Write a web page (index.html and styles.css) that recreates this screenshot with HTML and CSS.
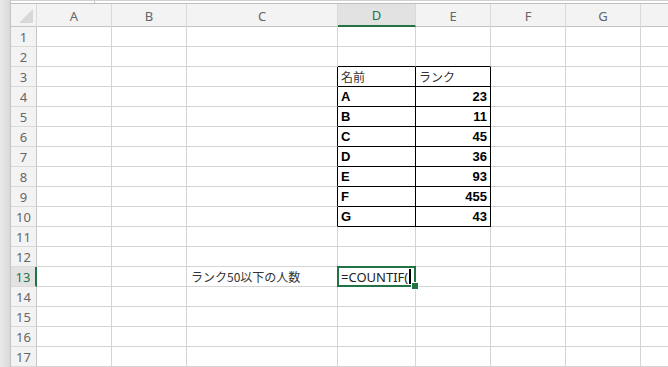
FILE: index.html
```html
<!DOCTYPE html>
<html lang="ja">
<head>
<meta charset="utf-8">
<link rel="stylesheet" href="styles.css">
</head>
<body>
<div class="app">
  <div class="strip"></div>
  <div class="main">
    <div class="topbar"><div class="namebox"></div></div>
    <div class="sheet">
      <div class="ch corner"></div><div class="ch">A</div><div class="ch">B</div><div class="ch">C</div><div class="ch sel">D</div><div class="ch">E</div><div class="ch">F</div><div class="ch">G</div><div class="ch last"></div>

      <div class="rh">1</div><div class="c"></div><div class="c"></div><div class="c"></div><div class="c"></div><div class="c"></div><div class="c"></div><div class="c"></div><div class="c last"></div>
      <div class="rh">2</div><div class="c"></div><div class="c"></div><div class="c"></div><div class="c tt"></div><div class="c tt"></div><div class="c"></div><div class="c"></div><div class="c last"></div>
      <div class="rh">3</div><div class="c"></div><div class="c"></div><div class="c tl"></div><div class="c tb jp">名前</div><div class="c tb jp">ランク</div><div class="c"></div><div class="c"></div><div class="c last"></div>
      <div class="rh">4</div><div class="c"></div><div class="c"></div><div class="c tl"></div><div class="c tb b">A</div><div class="c tb b num">23</div><div class="c"></div><div class="c"></div><div class="c last"></div>
      <div class="rh">5</div><div class="c"></div><div class="c"></div><div class="c tl"></div><div class="c tb b">B</div><div class="c tb b num">11</div><div class="c"></div><div class="c"></div><div class="c last"></div>
      <div class="rh">6</div><div class="c"></div><div class="c"></div><div class="c tl"></div><div class="c tb b">C</div><div class="c tb b num">45</div><div class="c"></div><div class="c"></div><div class="c last"></div>
      <div class="rh">7</div><div class="c"></div><div class="c"></div><div class="c tl"></div><div class="c tb b">D</div><div class="c tb b num">36</div><div class="c"></div><div class="c"></div><div class="c last"></div>
      <div class="rh">8</div><div class="c"></div><div class="c"></div><div class="c tl"></div><div class="c tb b">E</div><div class="c tb b num">93</div><div class="c"></div><div class="c"></div><div class="c last"></div>
      <div class="rh">9</div><div class="c"></div><div class="c"></div><div class="c tl"></div><div class="c tb b">F</div><div class="c tb b num">455</div><div class="c"></div><div class="c"></div><div class="c last"></div>
      <div class="rh">10</div><div class="c"></div><div class="c"></div><div class="c tl"></div><div class="c tb b">G</div><div class="c tb b num">43</div><div class="c"></div><div class="c"></div><div class="c last"></div>
      <div class="rh">11</div><div class="c"></div><div class="c"></div><div class="c"></div><div class="c"></div><div class="c"></div><div class="c"></div><div class="c"></div><div class="c last"></div>
      <div class="rh">12</div><div class="c"></div><div class="c"></div><div class="c"></div><div class="c"></div><div class="c"></div><div class="c"></div><div class="c"></div><div class="c last"></div>
      <div class="rh sel">13</div><div class="c"></div><div class="c"></div><div class="c jp label">ランク50以下の人数</div><div class="c active"><span class="formula">=COUNTIF(</span><span class="caret"></span></div><div class="c"></div><div class="c"></div><div class="c"></div><div class="c last"></div>
      <div class="rh">14</div><div class="c"></div><div class="c"></div><div class="c"></div><div class="c"></div><div class="c"></div><div class="c"></div><div class="c"></div><div class="c last"></div>
      <div class="rh">15</div><div class="c"></div><div class="c"></div><div class="c"></div><div class="c"></div><div class="c"></div><div class="c"></div><div class="c"></div><div class="c last"></div>
      <div class="rh">16</div><div class="c"></div><div class="c"></div><div class="c"></div><div class="c"></div><div class="c"></div><div class="c"></div><div class="c"></div><div class="c last"></div>
      <div class="rh">17</div><div class="c"></div><div class="c"></div><div class="c"></div><div class="c"></div><div class="c"></div><div class="c"></div><div class="c"></div><div class="c last"></div>
    </div>
  </div>
</div>
</body>
</html>
```

FILE: styles.css
```css
* { box-sizing: border-box; }
html, body { margin: 0; padding: 0; background: #fff; }
body { width: 668px; height: 367px; overflow: hidden; font-family: "Noto Sans", "Noto Sans CJK JP", sans-serif; }

.app { display: flex; height: 367px; }
.strip {
  width: 11px; flex: none;
  background: linear-gradient(to right, #e9e9e9, #d9d9d9);
  border-right: 1px solid #c4c4c4;
}
.main { flex: 1; display: flex; flex-direction: column; min-width: 0; }

.topbar {
  height: 4px; flex: none;
  background: #fff;
  border-top: 1px solid #d0d0d0;
  border-bottom: 1px solid #bdbdbd;
}
.namebox { width: 84px; height: 100%; border-right: 1px solid #c8c8c8; }

.sheet {
  display: grid;
  grid-template-columns: 26px 75px 75px 151px 78px 75px 75px 75px 27px;
  grid-template-rows: 23px repeat(17, 20px);
}

.ch {
  background: #f3f3f3;
  border-right: 1px solid #dadada;
  border-bottom: 1px solid #c6c6c6;
  color: #666;
  font-size: 13px;
  display: flex; align-items: center; justify-content: center;
  padding-top: 1px;
}
.ch.sel {
  background: #e2e2e2;
  color: #217346;
  border-bottom: 2px solid #217346;
}
.ch.last { border-right: none; }
.corner { position: relative; }
.corner::after {
  content: ""; position: absolute; right: 3px; bottom: 3px;
  width: 0; height: 0;
  border-left: 14px solid transparent;
  border-bottom: 14px solid #d8d8d8;
}

.rh {
  background: #f3f3f3;
  border-right: 1px solid #c6c6c6;
  border-bottom: 1px solid #dadada;
  color: #666;
  font-size: 13px;
  display: flex; align-items: center; justify-content: center;
}
.rh.sel {
  background: #e2e2e2;
  color: #217346;
  border-right: 2px solid #217346;
}

.c {
  border-right: 1px solid #d4d4d4;
  border-bottom: 1px solid #d4d4d4;
  font-size: 13px;
  color: #111;
  display: flex; align-items: center;
  padding: 0 2px 0 3px;
  white-space: nowrap;
  overflow: visible;
}
.c.last { border-right: none; }
.c.tt { border-bottom-color: #000; }
.c.tl { border-right-color: #000; }
.c.tb { border-right-color: #000; border-bottom-color: #000; }
.jp { font-family: "Noto Sans CJK JP", sans-serif; font-size: 12px; color: #333; }
.b { font-family: "Liberation Sans", Arial, sans-serif; font-weight: bold; font-size: 13px; color: #000; }
.num { justify-content: flex-end; padding-right: 3px; }
.label { padding-left: 4px; }

.active { position: relative; }
.active::before {
  content: ""; position: absolute;
  left: -1px; top: -1px; right: -1px; bottom: -1px;
  border: 2px solid #217346;
}
.active::after {
  content: ""; position: absolute;
  right: -4px; bottom: -4px;
  width: 6px; height: 6px;
  background: #217346;
  border: 1px solid #fff;
}
.formula { font-family: "Noto Sans", sans-serif; font-size: 13px; color: #222; }
.caret { width: 2px; height: 15px; background: #000; margin-left: 1px; }
```
